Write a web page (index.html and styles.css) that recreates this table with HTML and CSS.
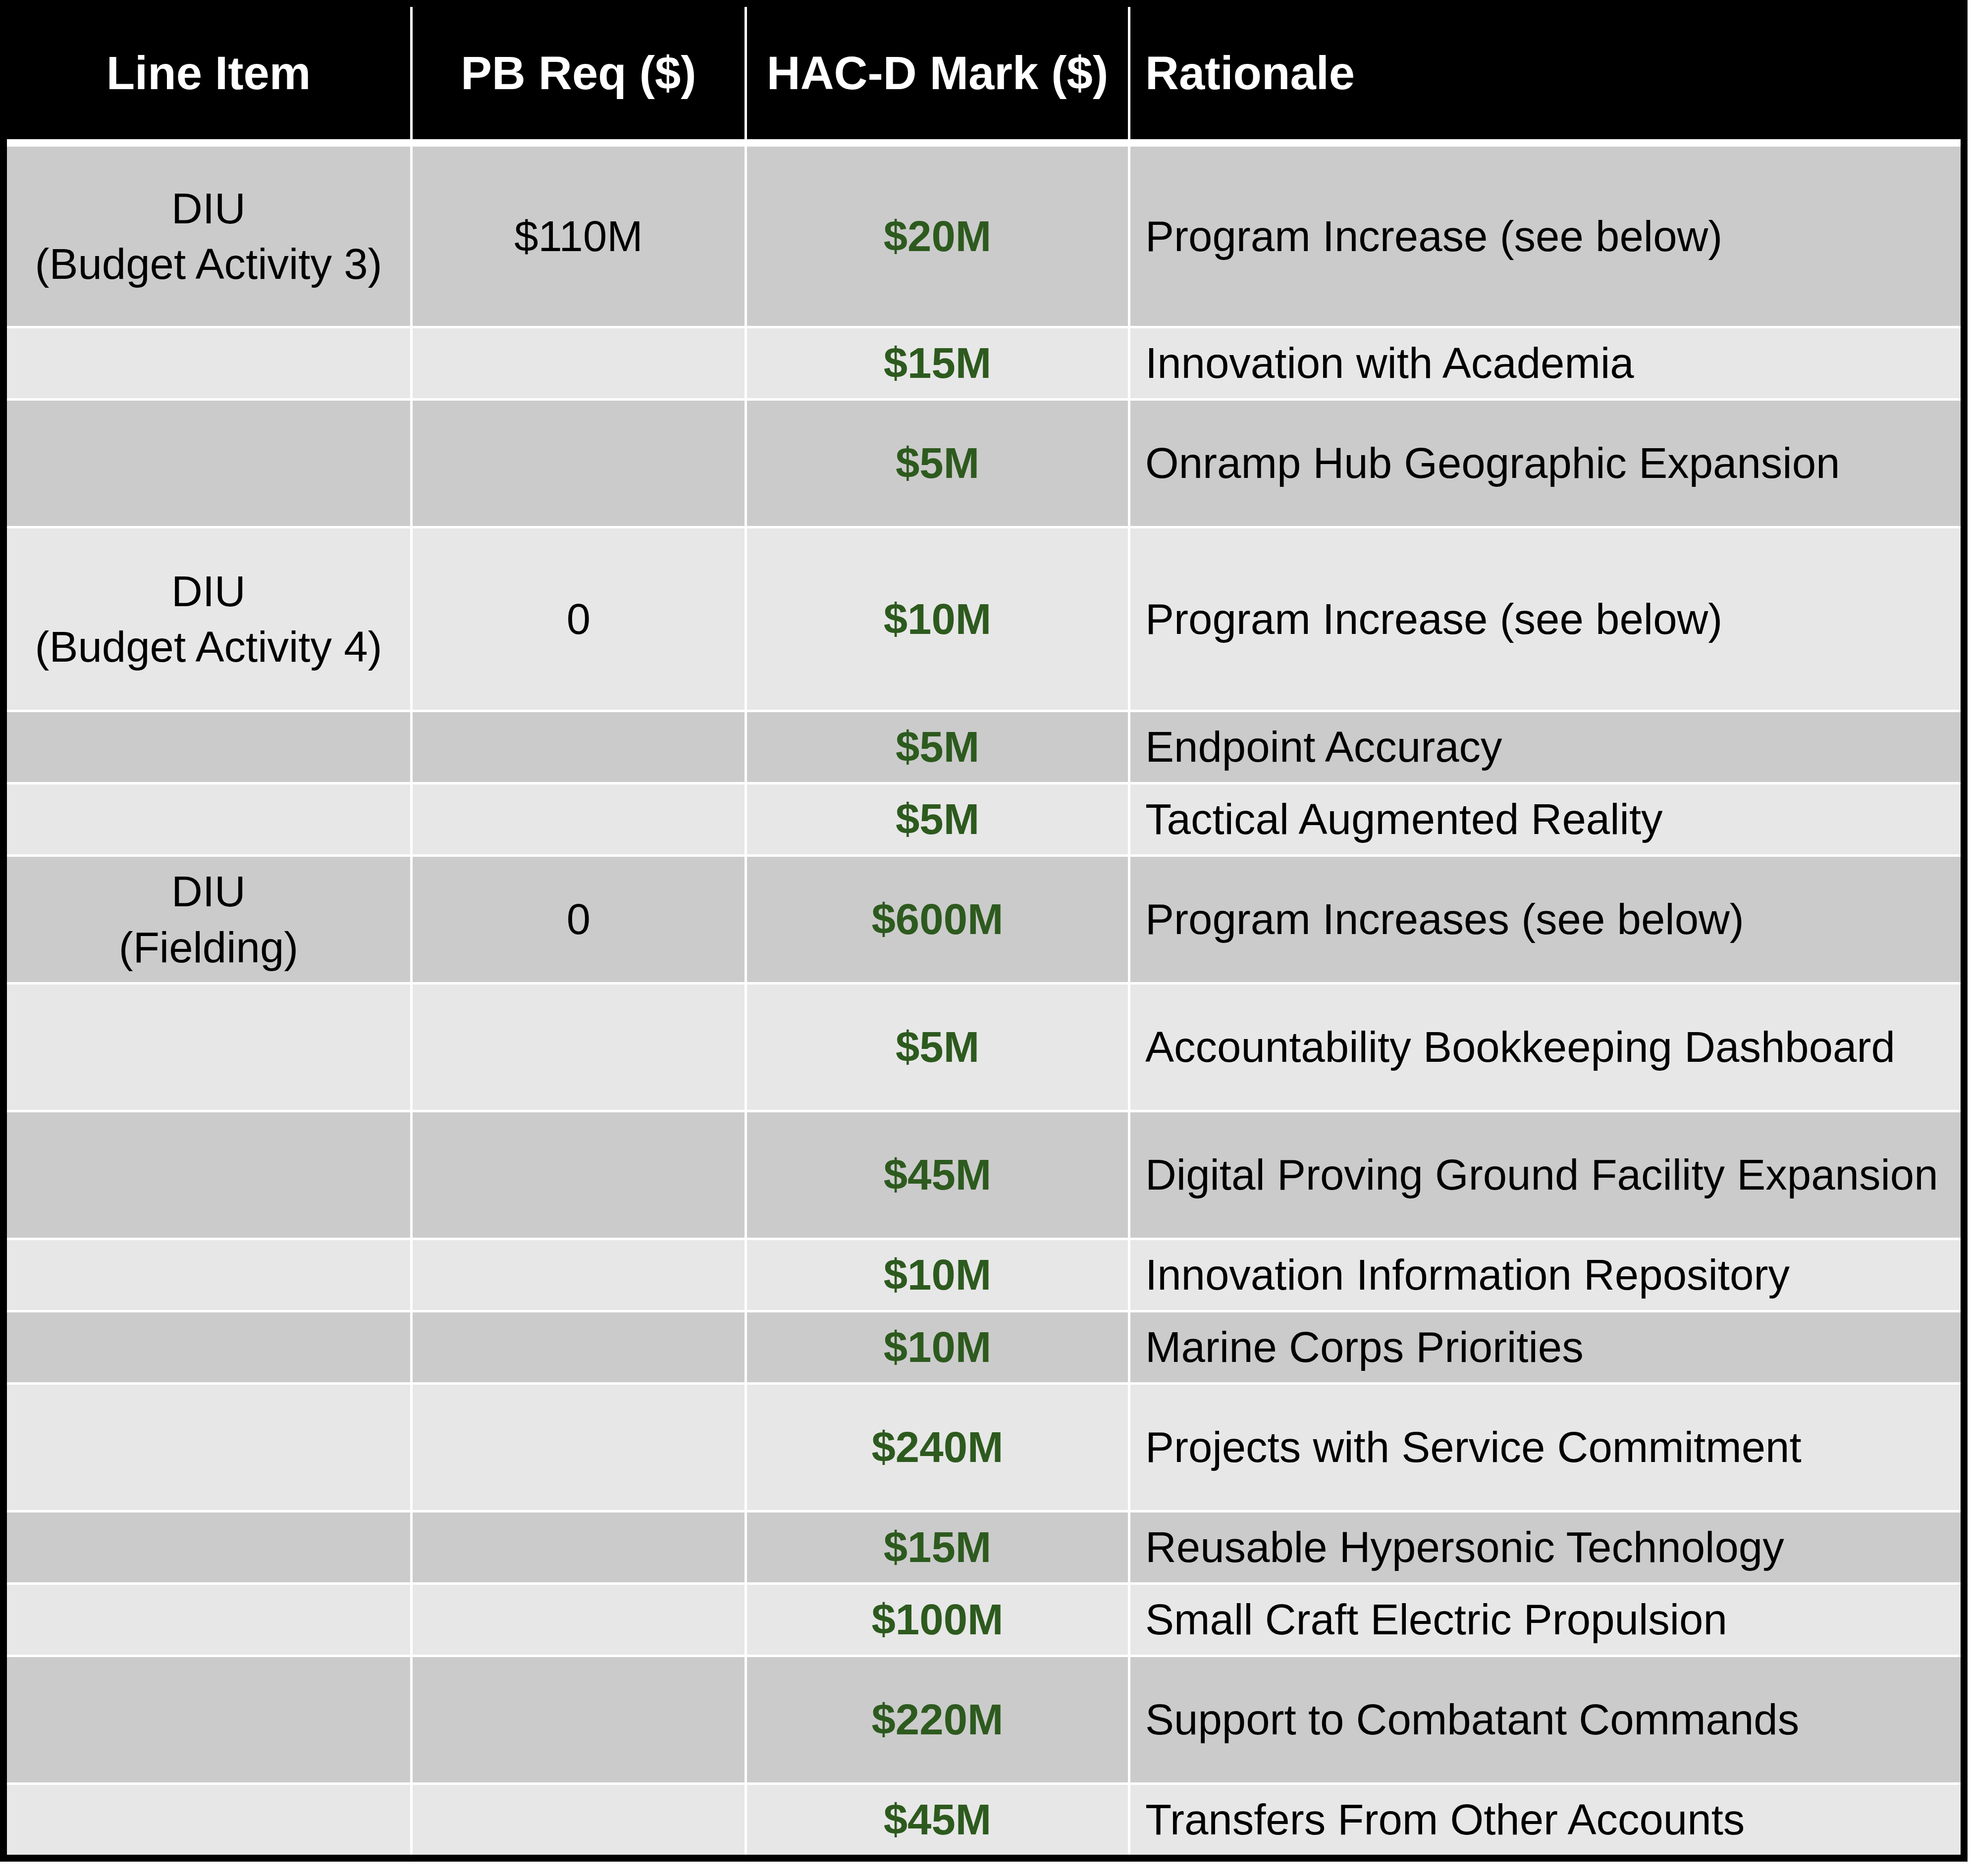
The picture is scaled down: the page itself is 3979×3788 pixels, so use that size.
FILE: index.html
```html
<!DOCTYPE html>
<html lang="en">
<head>
<meta charset="utf-8">
<title>DIU HAC-D Mark</title>
<link rel="stylesheet" href="styles.css">
</head>
<body>
<div class="sheet">
  <div class="head">
    <div class="hcell center">Line Item</div>
    <div class="hcell center">PB Req ($)</div>
    <div class="hcell center">HAC-D Mark ($)</div>
    <div class="hcell left">Rationale</div>
  </div>
  <div class="body">
    <div class="row dark tall">
      <div class="cell center"><span>DIU<br>(Budget Activity 3)</span></div>
      <div class="cell center">$110M</div>
      <div class="cell center mark">$20M</div>
      <div class="cell left">Program Increase (see below)</div>
    </div>
    <div class="row light short">
      <div class="cell"></div><div class="cell"></div>
      <div class="cell center mark">$15M</div>
      <div class="cell left">Innovation with Academia</div>
    </div>
    <div class="row dark mid">
      <div class="cell"></div><div class="cell"></div>
      <div class="cell center mark">$5M</div>
      <div class="cell left">Onramp Hub Geographic Expansion</div>
    </div>
    <div class="row light tall2">
      <div class="cell center"><span>DIU<br>(Budget Activity 4)</span></div>
      <div class="cell center">0</div>
      <div class="cell center mark">$10M</div>
      <div class="cell left">Program Increase (see below)</div>
    </div>
    <div class="row dark short">
      <div class="cell"></div><div class="cell"></div>
      <div class="cell center mark">$5M</div>
      <div class="cell left">Endpoint Accuracy</div>
    </div>
    <div class="row light short">
      <div class="cell"></div><div class="cell"></div>
      <div class="cell center mark">$5M</div>
      <div class="cell left">Tactical Augmented Reality</div>
    </div>
    <div class="row dark mid">
      <div class="cell center"><span>DIU<br>(Fielding)</span></div>
      <div class="cell center">0</div>
      <div class="cell center mark">$600M</div>
      <div class="cell left">Program Increases (see below)</div>
    </div>
    <div class="row light mid">
      <div class="cell"></div><div class="cell"></div>
      <div class="cell center mark">$5M</div>
      <div class="cell left">Accountability Bookkeeping Dashboard</div>
    </div>
    <div class="row dark mid">
      <div class="cell"></div><div class="cell"></div>
      <div class="cell center mark">$45M</div>
      <div class="cell left">Digital Proving Ground Facility Expansion</div>
    </div>
    <div class="row light short">
      <div class="cell"></div><div class="cell"></div>
      <div class="cell center mark">$10M</div>
      <div class="cell left">Innovation Information Repository</div>
    </div>
    <div class="row dark short">
      <div class="cell"></div><div class="cell"></div>
      <div class="cell center mark">$10M</div>
      <div class="cell left">Marine Corps Priorities</div>
    </div>
    <div class="row light mid">
      <div class="cell"></div><div class="cell"></div>
      <div class="cell center mark">$240M</div>
      <div class="cell left">Projects with Service Commitment</div>
    </div>
    <div class="row dark short">
      <div class="cell"></div><div class="cell"></div>
      <div class="cell center mark">$15M</div>
      <div class="cell left">Reusable Hypersonic Technology</div>
    </div>
    <div class="row light short">
      <div class="cell"></div><div class="cell"></div>
      <div class="cell center mark">$100M</div>
      <div class="cell left">Small Craft Electric Propulsion</div>
    </div>
    <div class="row dark mid">
      <div class="cell"></div><div class="cell"></div>
      <div class="cell center mark">$220M</div>
      <div class="cell left">Support to Combatant Commands</div>
    </div>
    <div class="row light short">
      <div class="cell"></div><div class="cell"></div>
      <div class="cell center mark">$45M</div>
      <div class="cell left">Transfers From Other Accounts</div>
    </div>
  </div>
</div>
</body>
</html>
```

FILE: styles.css
```css
html, body {
  margin: 0;
  padding: 0;
  background: #ffffff;
}

body {
  font-family: "Liberation Sans", Arial, sans-serif;
  color: #000000;
}

.sheet {
  width: 3944px;
  border: 14px solid #000000;
  background: #ffffff;
  display: flex;
  flex-direction: column;
  gap: 15px;
}

.head,
.row {
  display: grid;
  grid-template-columns: 814px 670px 769px 1676px;
  column-gap: 5px;
  background: #ffffff;
}

.head {
  height: 267px;
}

.hcell {
  background: #000000;
  color: #ffffff;
  font-weight: bold;
  font-size: 94px;
  display: flex;
  align-items: center;
}

.body {
  display: flex;
  flex-direction: column;
  gap: 5px;
}

.cell {
  display: flex;
  align-items: center;
  font-size: 87px;
  line-height: 1.29;
}

.center {
  justify-content: center;
  text-align: center;
}

.left {
  justify-content: flex-start;
  padding-left: 30px;
}

.dark .cell { background: #cbcbcb; }
.light .cell { background: #e7e7e7; }

.tall { height: 362px; }
.tall2 { height: 366px; }
.mid { height: 253px; }
.short { height: 141px; }

.mark {
  color: #2d5a1e;
  font-weight: bold;
}
```
